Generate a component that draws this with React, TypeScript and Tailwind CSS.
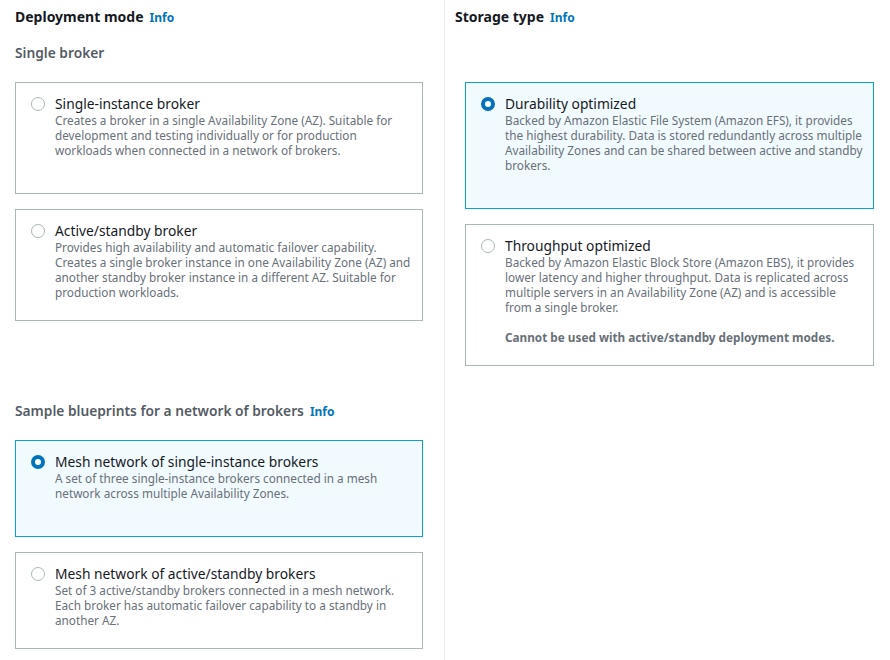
import React from "react";

type Opt = {
  title: string;
  lines: string[];
  note?: string;
  selected?: boolean;
  h: string;
};

function Radio({ on }: { on?: boolean }) {
  if (on) {
    return (
      <span className="mt-[3px] box-border h-[14px] w-[14px] shrink-0 rounded-full border-[4px] border-[#0073bb] bg-white" />
    );
  }
  return (
    <span className="mt-[3px] box-border h-[14px] w-[14px] shrink-0 rounded-full border border-[#aab7b8] bg-white" />
  );
}

function Card({ o }: { o: Opt }) {
  return (
    <div
      className={
        o.h +
        " box-border flex gap-[10px] overflow-hidden border pl-[15px] pr-[12px] pt-[11px] " +
        (o.selected ? "border-[#0aa3cb] bg-[#f1faff]" : "border-[#aab7b8] bg-white")
      }
    >
      <Radio on={o.selected} />
      <div className="flex flex-col whitespace-nowrap">
        <span className="text-[13.8px] leading-[19px] text-[#16191f]">{o.title}</span>
        {o.lines.map((l) => (
          <span key={l} className="text-[11.75px] leading-[15px] text-[#687078]">
            {l}
          </span>
        ))}
        {o.note && (
          <span className="mt-[15px] text-[11.75px] font-bold leading-[15px] text-[#687078]">{o.note}</span>
        )}
      </div>
    </div>
  );
}

function Heading({ text, sub }: { text: string; sub?: boolean }) {
  return (
    <div className="flex items-baseline gap-[6px]">
      <span
        className={
          sub ? "text-[13.75px] font-semibold text-[#545b64]" : "text-[14px] font-bold text-[#16191f]"
        }
      >
        {text}
      </span>
      <span className="text-[12px] font-bold text-[#0073bb]">Info</span>
    </div>
  );
}

export default function App() {
  return (
    <div
      className="flex h-[660px] w-[890px] bg-white"
      style={{ fontFamily: '"Noto Sans", "Open Sans", sans-serif' }}
    >
      <div className="box-border flex w-[445px] flex-col border-r border-[#eaeded] pl-[15px] pr-[21px] pt-[6px]">
        <Heading text="Deployment mode" />
        <div className="mt-[16px] text-[13.75px] font-semibold text-[#545b64]">Single broker</div>
        <div className="mt-[18px] flex flex-col gap-[15px]">
          <Card
            o={{
              h: "h-[112px]",
              title: "Single-instance broker",
              lines: [
                "Creates a broker in a single Availability Zone (AZ). Suitable for",
                "development and testing individually or for production",
                "workloads when connected in a network of brokers.",
              ],
            }}
          />
          <Card
            o={{
              h: "h-[112px]",
              title: "Active/standby broker",
              lines: [
                "Provides high availability and automatic failover capability.",
                "Creates a single broker instance in one Availability Zone (AZ) and",
                "another standby broker instance in a different AZ. Suitable for",
                "production workloads.",
              ],
            }}
          />
        </div>
        <div className="mt-[80px]">
          <Heading text="Sample blueprints for a network of brokers" sub />
        </div>
        <div className="mt-[19px] flex flex-col gap-[15px]">
          <Card
            o={{
              h: "h-[97px]",
              selected: true,
              title: "Mesh network of single-instance brokers",
              lines: [
                "A set of three single-instance brokers connected in a mesh",
                "network across multiple Availability Zones.",
              ],
            }}
          />
          <Card
            o={{
              h: "h-[97px]",
              title: "Mesh network of active/standby brokers",
              lines: [
                "Set of 3 active/standby brokers connected in a mesh network.",
                "Each broker has automatic failover capability to a standby in",
                "another AZ.",
              ],
            }}
          />
        </div>
      </div>
      <div className="box-border flex flex-1 flex-col pl-[10px] pt-[6px]">
        <Heading text="Storage type" />
        <div className="ml-[10px] mt-[55px] flex w-[409px] flex-col gap-[15px]">
          <Card
            o={{
              h: "h-[127px]",
              selected: true,
              title: "Durability optimized",
              lines: [
                "Backed by Amazon Elastic File System (Amazon EFS), it provides",
                "the highest durability. Data is stored redundantly across multiple",
                "Availability Zones and can be shared between active and standby",
                "brokers.",
              ],
            }}
          />
          <Card
            o={{
              h: "h-[142px]",
              title: "Throughput optimized",
              lines: [
                "Backed by Amazon Elastic Block Store (Amazon EBS), it provides",
                "lower latency and higher throughput. Data is replicated across",
                "multiple servers in an Availability Zone (AZ) and is accessible",
                "from a single broker.",
              ],
              note: "Cannot be used with active/standby deployment modes.",
            }}
          />
        </div>
      </div>
    </div>
  );
}
